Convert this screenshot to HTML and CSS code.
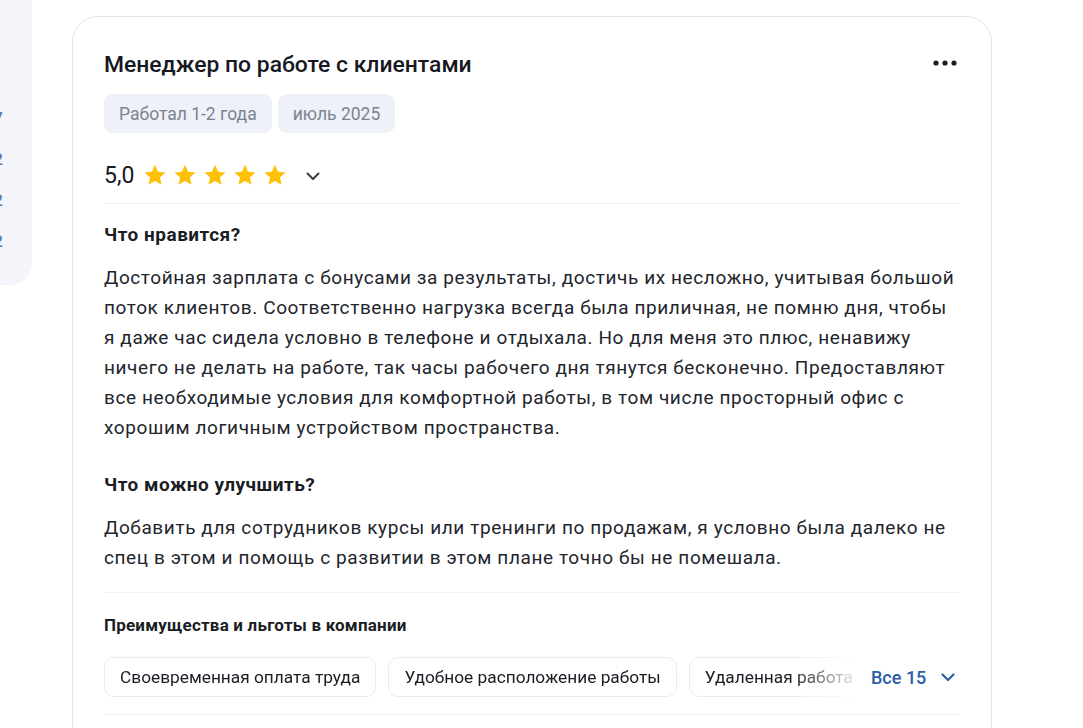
FILE: index.html
```html
<!DOCTYPE html>
<html lang="ru">
<head>
<meta charset="utf-8">
<link rel="stylesheet" href="styles.css">
</head>
<body>
<div class="page">
  <aside class="side">
    <div class="side-inner">
      <span class="side-num">7</span>
      <span class="side-num">2</span>
      <span class="side-num">2</span>
      <span class="side-num">2</span>
    </div>
  </aside>
  <article class="card">
    <div class="card-head">
      <h1 class="title">Менеджер по работе с клиентами</h1>
      <button class="more" aria-label="Ещё">
        <svg width="24" height="6" viewBox="0 0 24 6"><circle cx="3" cy="3" r="2.6" fill="#1a1d24"/><circle cx="12" cy="3" r="2.6" fill="#1a1d24"/><circle cx="21" cy="3" r="2.6" fill="#1a1d24"/></svg>
      </button>
    </div>
    <div class="tags">
      <span class="tag">Работал 1-2 года</span>
      <span class="tag">июль 2025</span>
    </div>
    <div class="rating">
      <span class="score">5,0</span>
      <span class="stars">
        <svg class="star" viewBox="0 0 24 24"><path d="M12 1.8l3.1 6.9 7.4.7-5.6 5 1.7 7.4L12 17.9l-6.6 3.9 1.7-7.4-5.6-5 7.4-.7z" fill="#ffc107"/></svg>
        <svg class="star" viewBox="0 0 24 24"><path d="M12 1.8l3.1 6.9 7.4.7-5.6 5 1.7 7.4L12 17.9l-6.6 3.9 1.7-7.4-5.6-5 7.4-.7z" fill="#ffc107"/></svg>
        <svg class="star" viewBox="0 0 24 24"><path d="M12 1.8l3.1 6.9 7.4.7-5.6 5 1.7 7.4L12 17.9l-6.6 3.9 1.7-7.4-5.6-5 7.4-.7z" fill="#ffc107"/></svg>
        <svg class="star" viewBox="0 0 24 24"><path d="M12 1.8l3.1 6.9 7.4.7-5.6 5 1.7 7.4L12 17.9l-6.6 3.9 1.7-7.4-5.6-5 7.4-.7z" fill="#ffc107"/></svg>
        <svg class="star" viewBox="0 0 24 24"><path d="M12 1.8l3.1 6.9 7.4.7-5.6 5 1.7 7.4L12 17.9l-6.6 3.9 1.7-7.4-5.6-5 7.4-.7z" fill="#ffc107"/></svg>
      </span>
      <svg class="chev" width="14" height="9" viewBox="0 0 14 9"><path d="M1.5 1.5L7 7l5.5-5.5" fill="none" stroke="#3a3d44" stroke-width="2" stroke-linecap="round" stroke-linejoin="round"/></svg>
    </div>
    <div class="section">
      <h2 class="sec-title">Что нравится?</h2>
      <p class="sec-text">Достойная зарплата с бонусами за результаты, достичь их несложно, учитывая большой поток клиентов. Соответственно нагрузка всегда была приличная, не помню дня, чтобы я даже час сидела условно в телефоне и отдыхала. Но для меня это плюс, ненавижу ничего не делать на работе, так часы рабочего дня тянутся бесконечно. Предоставляют все необходимые условия для комфортной работы, в том числе просторный офис с хорошим логичным устройством пространства.</p>
      <h2 class="sec-title sec-title-2">Что можно улучшить?</h2>
      <p class="sec-text">Добавить для сотрудников курсы или тренинги по продажам, я условно была далеко не спец в этом и помощь с развитии в этом плане точно бы не помешала.</p>
    </div>
    <div class="benefits">
      <h3 class="ben-title">Преимущества и льготы в компании</h3>
      <div class="ben-row">
        <div class="chips">
          <span class="chip">Своевременная оплата труда</span>
          <span class="chip">Удобное расположение работы</span>
          <span class="chip">Удаленная работа</span>
        </div>
        <button class="all">Все 15
          <svg width="14" height="9" viewBox="0 0 14 9"><path d="M1.5 1.5L7 7l5.5-5.5" fill="none" stroke="#2f5da6" stroke-width="2.2" stroke-linecap="round" stroke-linejoin="round"/></svg>
        </button>
      </div>
    </div>
  </article>
</div>
</body>
</html>
```

FILE: styles.css
```css
* { box-sizing: border-box; }
html, body { margin: 0; padding: 0; background: #fff; }
body {
  font-family: Roboto, "Noto Sans", Arial, sans-serif;
  color: #1a1d24;
  width: 1083px;
  height: 728px;
  overflow: hidden;
}
.page {
  display: flex;
  align-items: flex-start;
  gap: 40px;
}
.side {
  width: 32px;
  height: 285px;
  flex: none;
  background: #f3f5fa;
  border-bottom-right-radius: 22px;
  overflow: hidden;
}
.side-inner {
  width: 40px;
  margin-left: -37px;
  padding-top: 106px;
  display: flex;
  flex-direction: column;
  align-items: flex-end;
  gap: 17px;
}
.side-num {
  font-size: 17px;
  line-height: 24px;
  font-weight: 500;
  color: #5c7cb0;
}
.card {
  flex: none;
  width: 920px;
  height: 760px;
  margin-top: 16px;
  border: 1px solid #dfe4ec;
  border-radius: 26px;
  padding: 33px 31px 0 31px;
}
.card-head {
  display: flex;
  justify-content: space-between;
  align-items: center;
}
.title {
  margin: 0;
  font-size: 22.9px;
  line-height: 30px;
  font-weight: 500;
  color: #16191f;
}
.more {
  border: 0;
  background: none;
  padding: 0;
  margin-right: 3px;
  margin-top: -5px;
  display: flex;
}
.tags {
  display: flex;
  gap: 6px;
  margin-top: 14px;
}
.tag {
  background: #eef1f7;
  border-radius: 9px;
  height: 39px;
  padding: 0 15px;
  display: flex;
  align-items: center;
  font-size: 17.5px;
  color: #7b8391;
}
.rating {
  display: flex;
  align-items: center;
  height: 34px;
  margin-top: 25px;
}
.score {
  font-size: 23px;
  font-weight: 400;
  color: #16191f;
  margin-right: 9px;
}
.stars {
  display: flex;
  gap: 6px;
}
.star {
  width: 24px;
  height: 24px;
  display: block;
}
.chev {
  margin-left: 19px;
  margin-top: 2px;
}
.section {
  margin-top: 11px;
  border-top: 1px solid #eef0f4;
  padding-top: 18px;
}
.sec-title {
  margin: 0;
  font-size: 19px;
  line-height: 26px;
  font-weight: 700;
  letter-spacing: 0.5px;
  color: #1a1d24;
}
.sec-title-2 { margin-top: 29px; }
.sec-text {
  margin: 15px 0 0;
  font-size: 19px;
  line-height: 30px;
  letter-spacing: 0.6px;
  color: #22252c;
}
.benefits {
  margin-top: 19px;
  border-top: 1px solid #eef0f4;
  padding-top: 20px;
  border-bottom: 1px solid #eef0f4;
  padding-bottom: 17px;
}
.ben-title {
  margin: 0;
  font-size: 17px;
  line-height: 24px;
  font-weight: 700;
  letter-spacing: 0.2px;
  color: #1a1d24;
}
.ben-row {
  display: flex;
  align-items: center;
  margin-top: 20px;
}
.chips {
  display: flex;
  gap: 12px;
  width: 757px;
  overflow: hidden;
  -webkit-mask-image: linear-gradient(to right, #000 690px, transparent 757px);
  mask-image: linear-gradient(to right, #000 690px, transparent 757px);
}
.chip {
  flex: none;
  height: 40px;
  padding: 0 15px;
  border: 1px solid #e8ebf1;
  border-radius: 10px;
  display: flex;
  align-items: center;
  font-size: 17.3px;
  color: #1a1d24;
}
.all {
  border: 0;
  background: none;
  padding: 0;
  margin-left: 10px;
  font-family: inherit;
  font-size: 18px;
  font-weight: 500;
  color: #2f5da6;
  display: flex;
  align-items: center;
  gap: 15px;
}
```
